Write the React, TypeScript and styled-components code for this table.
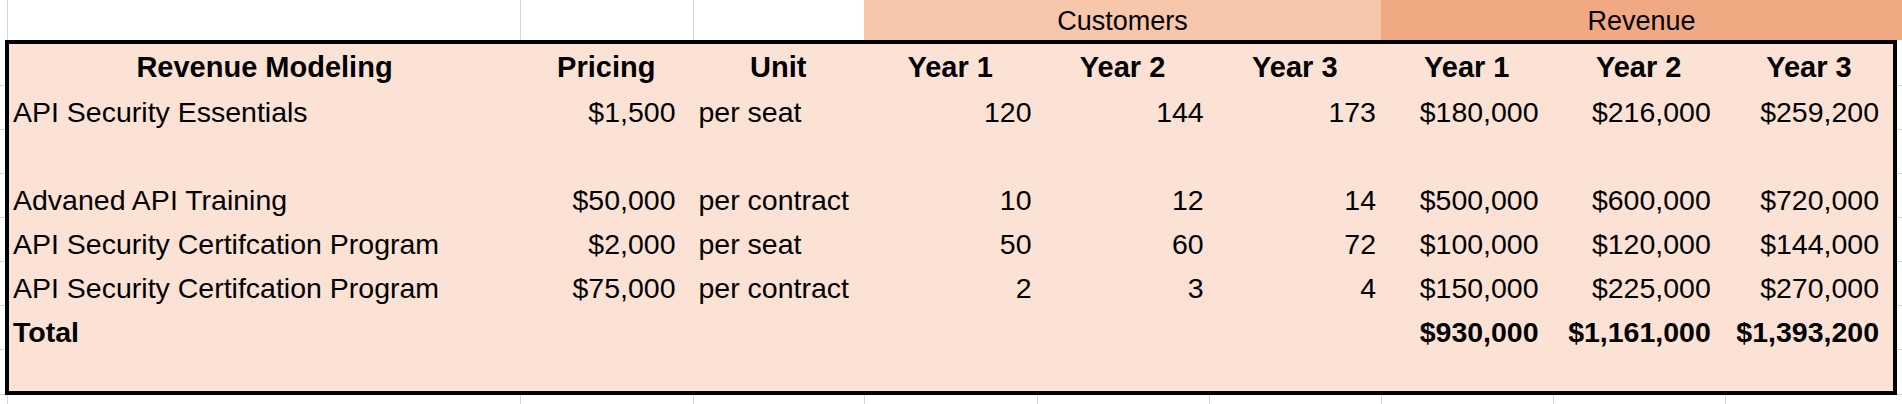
import React from "react";
import styled, { createGlobalStyle } from "styled-components";

const GlobalStyle = createGlobalStyle`
  html, body {
    margin: 0;
    padding: 0;
    background: #ffffff;
  }
  body {
    font-family: "Liberation Sans", Arial, sans-serif;
    color: #000000;
  }
`;

const GRID = "#d4d4d4";
const BODY_FILL = "#fbe2d5";
const CUSTOMERS_FILL = "#f7c7ac";
const REVENUE_FILL = "#f1a983";

const COLUMNS =
  "511px 172.5px 171.5px 172.5px 172.2px 172.3px 171.6px 172.2px 1fr";

type Line = {
  label: string;
  price: string;
  unit: string;
  customers: number[];
  revenue: string[];
};

const lines: (Line | null)[] = [
  {
    label: "API Security Essentials",
    price: "$1,500",
    unit: "per seat",
    customers: [120, 144, 173],
    revenue: ["$180,000", "$216,000", "$259,200"],
  },
  null,
  {
    label: "Advaned API Training",
    price: "$50,000",
    unit: "per contract",
    customers: [10, 12, 14],
    revenue: ["$500,000", "$600,000", "$720,000"],
  },
  {
    label: "API Security Certifcation Program",
    price: "$2,000",
    unit: "per seat",
    customers: [50, 60, 72],
    revenue: ["$100,000", "$120,000", "$144,000"],
  },
  {
    label: "API Security Certifcation Program",
    price: "$75,000",
    unit: "per contract",
    customers: [2, 3, 4],
    revenue: ["$150,000", "$225,000", "$270,000"],
  },
];

const totals = ["$930,000", "$1,161,000", "$1,393,200"];
const years = ["Year 1", "Year 2", "Year 3"];

const App = () => {
  return (
    <Sheet>
      <GlobalStyle />
      <GroupBand>
        <Gutter />
        <BlankCell />
        <BlankCell />
        <BlankCell />
        <GroupCell $fill={CUSTOMERS_FILL}>Customers</GroupCell>
        <GroupCell $fill={REVENUE_FILL}>Revenue</GroupCell>
      </GroupBand>

      <TableRow>
        <SideGutter>
          {Array.from({ length: 8 }).map((_, i) => (
            <GutterStub key={i} />
          ))}
        </SideGutter>
        <Table>
          <HeadCell>Revenue Modeling</HeadCell>
          <HeadCell>Pricing</HeadCell>
          <HeadCell>Unit</HeadCell>
          {years.map((y) => (
            <HeadCell key={"c" + y}>{y}</HeadCell>
          ))}
          {years.map((y) => (
            <HeadCell key={"r" + y}>{y}</HeadCell>
          ))}

          {lines.map((line, i) =>
            line ? (
              <React.Fragment key={i}>
                <Cell $pad="0 0 0 4px">{line.label}</Cell>
                <Cell $align="end" $pad="0 17px 0 0">
                  {line.price}
                </Cell>
                <Cell $pad="0 0 0 6px">{line.unit}</Cell>
                {line.customers.map((c, j) => (
                  <Cell key={j} $align="end" $pad="0 5px 0 0">
                    {c}
                  </Cell>
                ))}
                {line.revenue.map((r, j) => (
                  <Cell key={j} $align="end" $pad="0 14px 0 0">
                    {r}
                  </Cell>
                ))}
              </React.Fragment>
            ) : (
              <EmptyRow key={i} />
            )
          )}

          <Cell $bold $pad="0 0 0 4px">
            Total
          </Cell>
          <Cell />
          <Cell />
          <Cell />
          <Cell />
          <Cell />
          {totals.map((t) => (
            <Cell key={t} $bold $align="end" $pad="0 14px 0 0">
              {t}
            </Cell>
          ))}
          <EmptyRow />
        </Table>
        <SideGutter>
          {Array.from({ length: 8 }).map((_, i) => (
            <GutterStub key={i} />
          ))}
        </SideGutter>
      </TableRow>

      <FootBand>
        <Gutter />
        {Array.from({ length: 9 }).map((_, i) => (
          <FootCell key={i} />
        ))}
        <Gutter />
      </FootBand>
    </Sheet>
  );
};

export default App;

const Sheet = styled.div`
  width: 1902px;
  height: 404px;
  overflow: hidden;
  background: #ffffff;
`;

const GroupBand = styled.div`
  display: grid;
  grid-template-columns: 7px 513px 172.5px 171.5px 517px 1fr;
  height: 40px;
`;

const Gutter = styled.div``;

const BlankCell = styled.div`
  border-left: 1px solid ${GRID};
`;

const GroupCell = styled.div<{ $fill: string }>`
  display: flex;
  align-items: center;
  justify-content: center;
  padding-top: 3px;

  background: ${({ $fill }) => $fill};
  font-size: 27px;
`;

const TableRow = styled.div`
  display: flex;
  height: 355px;
`;

const SideGutter = styled.div`
  display: grid;
  grid-template-rows: 46px repeat(6, 44px) 1fr;
  width: 5px;
`;

const GutterStub = styled.div`
  border-bottom: 1px solid ${GRID};
`;

const Table = styled.div`
  display: grid;
  grid-template-columns: ${COLUMNS};
  grid-template-rows: 43px repeat(6, 44px) 1fr;
  box-sizing: border-box;
  width: 1892px;
  height: 355px;

  background: ${BODY_FILL};
  border: 4px solid #000000;
`;

const HeadCell = styled.div`
  display: flex;
  align-items: flex-end;
  justify-content: center;
  padding-bottom: 3px;

  font-size: 29px;
  font-weight: 700;
  white-space: nowrap;
`;

const Cell = styled.div<{ $align?: "start" | "end"; $bold?: boolean; $pad?: string }>`
  display: flex;
  align-items: flex-end;
  justify-content: ${({ $align }) => ($align === "end" ? "flex-end" : "flex-start")};
  padding: ${({ $pad }) => $pad ?? "0"};
  padding-bottom: 2px;

  font-size: 28.5px;
  font-weight: ${({ $bold }) => ($bold ? 700 : 400)};
  white-space: nowrap;
`;

const EmptyRow = styled.div`
  grid-column: 1 / -1;
`;

const FootBand = styled.div`
  display: grid;
  grid-template-columns: 7px 513px 172.5px 171.5px 172.5px 172.2px 172.3px 171.6px 172.2px 170.2px 1fr;
  height: 9px;
`;

const FootCell = styled.div`
  border-left: 1px solid ${GRID};
`;
